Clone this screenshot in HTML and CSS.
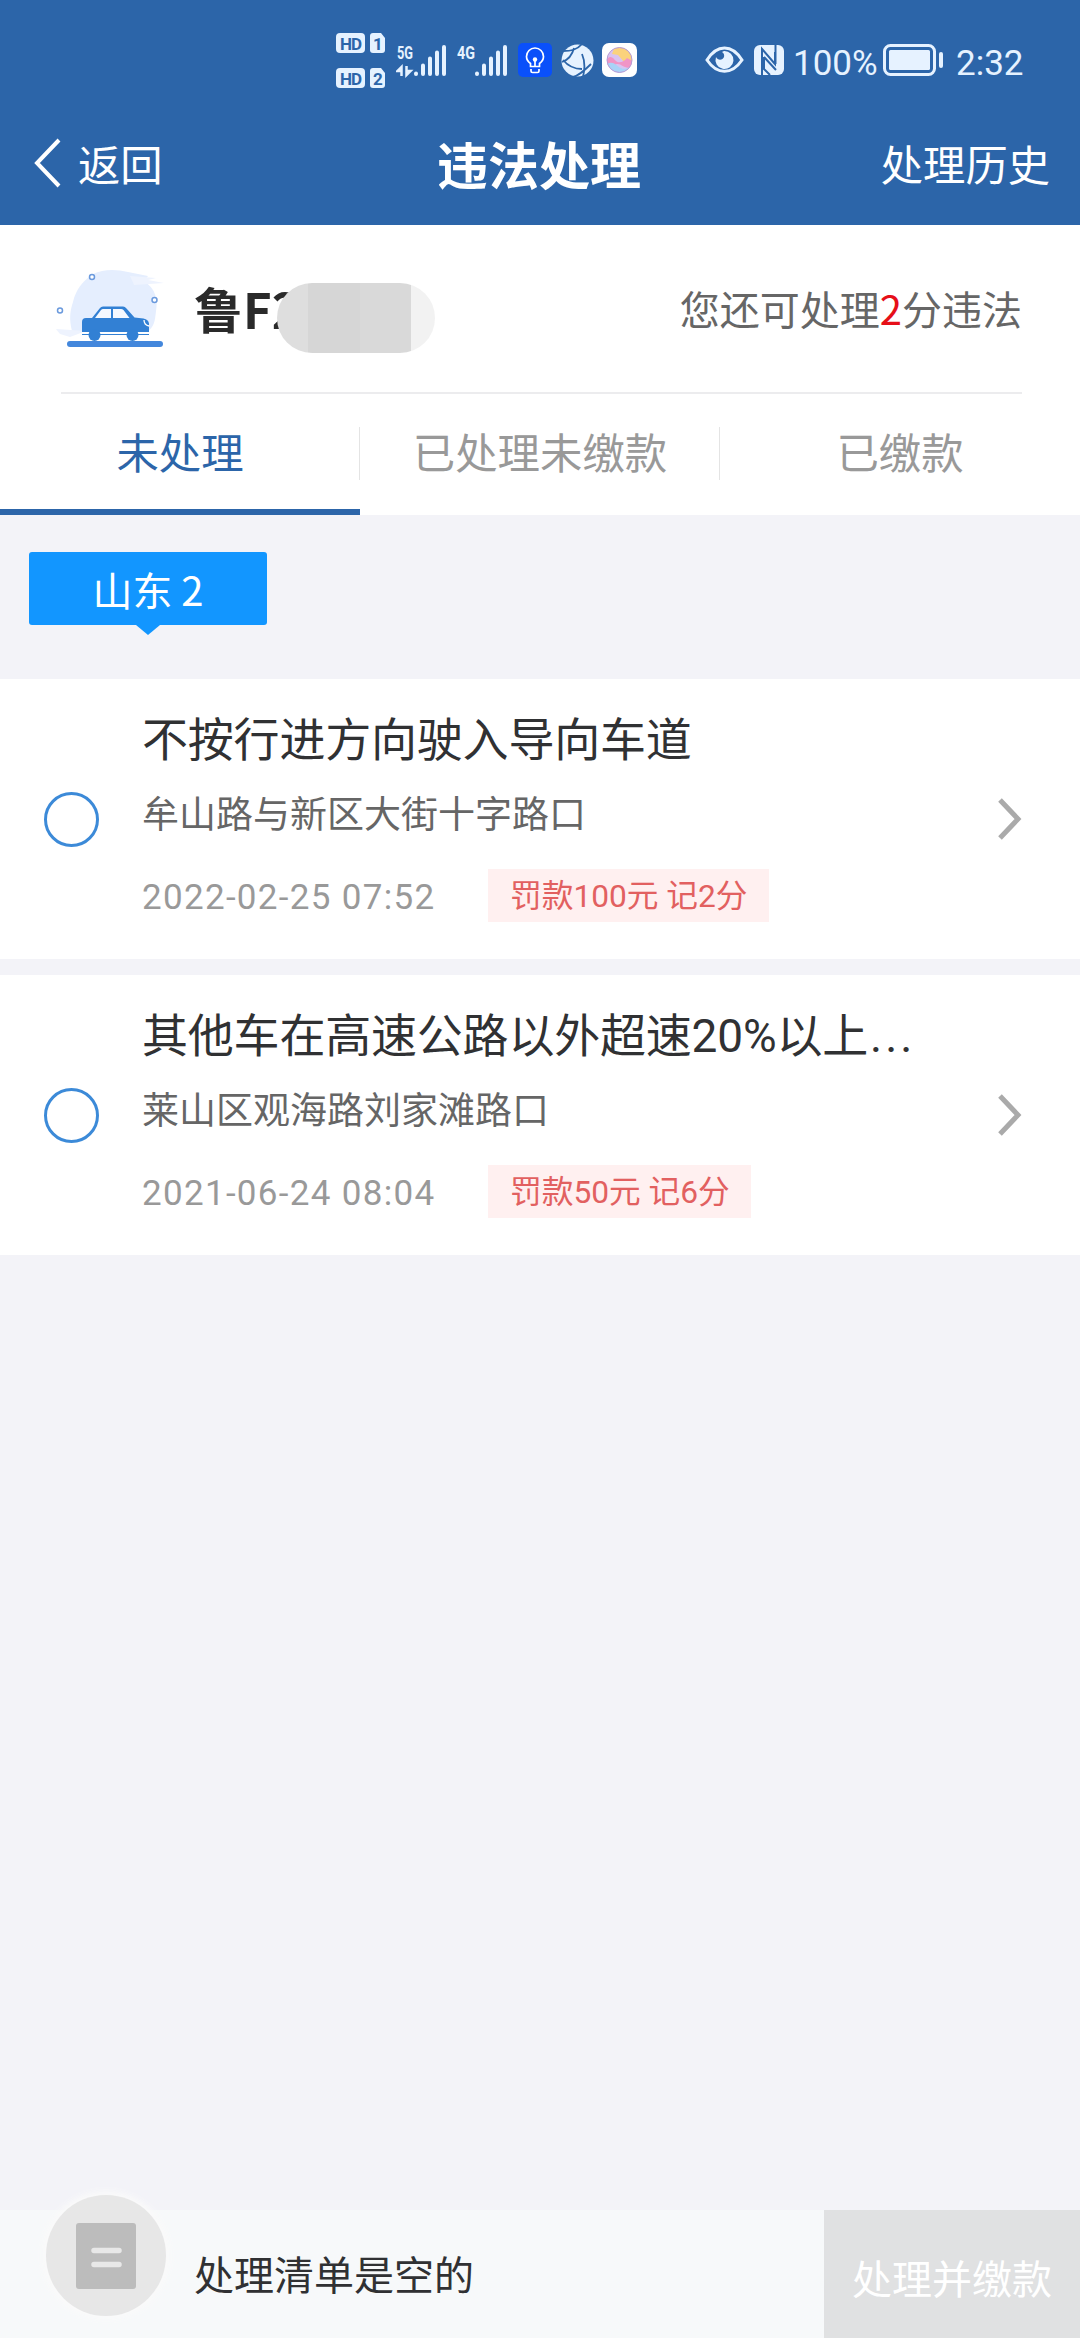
FILE: index.html
```
<!DOCTYPE html>
<html lang="zh-CN">
<head>
    <meta charset="UTF-8">
    <title>违法处理</title>
    <link rel="stylesheet" href="styles.css">
</head>
<body>

    <!-- 状态栏 -->
    <div class="status">
        <svg class="hd" width="50" height="60" viewBox="336 30 50 60">
            <rect x="336" y="33" width="29" height="20" rx="4"/>
            <path d="M370 36q0-3 3-3h8l4 5v12q0 3-3 3h-9q-3 0-3-3z"/>
            <rect x="336" y="68" width="29" height="20" rx="4"/>
            <path d="M370 71q0-3 3-3h8l4 5v12q0 3-3 3h-9q-3 0-3-3z"/>
            <text x="340" y="49.500" textLength="22">HD</text>
            <text x="373" y="49.500">1</text>
            <text x="340" y="84.500" textLength="22">HD</text>
            <text x="373" y="84.500">2</text>
        </svg>
        <svg class="signal" width="51" height="60" viewBox="396 30 51 60">
            <text x="397" y="59" textLength="16" lengthAdjust="spacingAndGlyphs">5G</text>
            <path d="M401.500 76V67l-4 4h4M406.500 66v9l4-4h-4" class="arrows"/>
            <path d="M416 73.500v.5M423 65.500V74M430 58.500V74M437 52.500V74M444 47V74" class="bars"/>
        </svg>
        <svg class="signal four" width="51" height="60" viewBox="457 30 51 60">
            <text x="457" y="59" textLength="18" lengthAdjust="spacingAndGlyphs">4G</text>
            <path d="M477 73.500v.5M484 65.500V74M491 58.500V74M498 52.500V74M505 47V74" class="bars"/>
        </svg>
        <svg class="bulb" width="34" height="34" viewBox="0 0 34 34">
            <rect width="34" height="34" rx="5" fill="#0a50fa"/>
            <path d="M12.500 23.500v-3c-2-1.500-4-4-4-7a8.500 8.500 0 0 1 17 0c0 3-2 5.500-4 7v3zM13 26v2q0 1.500 1.500 1.500h5q1.500 0 1.500-1.500v-2M17 23v-6" fill="none" stroke="#fff" stroke-width="1.700"/>
            <circle cx="17" cy="16.500" r="2.200" fill="#fff"/>
        </svg>
        <svg class="globe" width="33" height="33" viewBox="0 0 33 33">
            <circle cx="16.500" cy="16.500" r="16" fill="#e6f2ff"/>
            <path d="M2 7c8 0 14-1 19-7M1 18c6-2 10-6 12-14M2 16c5 6 12 9 19 9M22 33c2-8 2-16-1-23M12 33c5-1 10-5 18-13" fill="none" stroke="#2c65a9" stroke-width="1.800"/>
        </svg>
        <svg class="ball" width="35" height="34" viewBox="0 0 35 34">
            <defs>
                <clipPath id="ball"><circle cx="17.500" cy="17" r="12.500"/></clipPath>
            </defs>
            <rect width="35" height="34" rx="7" fill="#fff"/>
            <g clip-path="url(#ball)">
                <path d="M4 3h28v28H4z" fill="#d9c3f0"/>
                <path d="M13 3h18v18l-8-1-7-8-6-1z" fill="#fbd27c"/>
                <path d="M4 17c5-6 7-2 10 1s9 0 11-3l7 4v5c-9 3-13-4-17-3s-7 4-11 2z" fill="#f095c6"/>
                <path d="M4 21c8-4 10 2 15 4 4 2 8 0 10-2v9H4z" fill="#a9d3f7"/>
            </g>
            <circle cx="17.500" cy="17" r="12.500" fill="none" stroke="#b79bd6" stroke-width="1"/>
        </svg>
        <svg class="eye" width="39" height="28" viewBox="0 0 39 28">
            <path d="M2 14C12-2 27-2 37 14 27 29 12 29 2 14z" fill="none" stroke="#e6f2ff" stroke-width="3"/>
            <path d="M19 5a9 9 0 1 1-8 6c2 4 7 3 8 0 .5-2 0-4-2-5z" fill="#e6f2ff"/>
        </svg>
        <svg class="nfc" width="30" height="30" viewBox="0 0 30 30">
            <rect width="30" height="30" rx="6" fill="#e6f2ff"/>
            <path d="M8 30V4l13 15V7M8 4l13 15M21.500 0v19M10 12v12l6 6M10 12l12 13" fill="none" stroke="#2c65a9" stroke-width="2"/>
        </svg>
        <span class="percent">100%</span>
        <svg class="battery" width="61" height="32" viewBox="0 0 61 32">
            <rect x="1.500" y="1.500" width="50" height="29" rx="6" fill="none" stroke="#e6f2ff" stroke-width="3"/>
            <rect x="6" y="6" width="41" height="20" rx="1.500" fill="#e6f2ff"/>
            <rect x="56" y="8" width="4" height="16" rx="2" fill="#e6f2ff"/>
        </svg>
        <span class="clock">2:32</span>
    </div>

    <!-- 导航栏 -->
    <header class="nav">
        <a class="back">
            <svg width="27" height="50" viewBox="0 0 27 50"><path d="M25 2L3 25l22 23"/></svg>
            返回
        </a>
        <h1>违法处理</h1>
        <a class="history">处理历史</a>
    </header>

    <!-- 车辆信息 -->
    <section class="car">
        <svg class="car-icon" width="112" height="84" viewBox="54 268 112 84">
            <path d="M72 331c-3-12-2-20 1-29 3-13 10-21 20-28 10-5 23-5 35-2l20 4-4 5c12 8 14 19 12 30-1 10-2 16-8 20z" fill="#e5eefe"/>
            <path d="M56 329l30 2-16 6-10-3zM130 276l26 2-8 2 16 3-30 2z" fill="#eef3fe"/>
            <g fill="#fff" stroke="#6b9add" stroke-width="1.500">
                <circle cx="92" cy="277" r="2.500"/>
                <circle cx="154.500" cy="300" r="2.500"/>
                <circle cx="60" cy="310.500" r="2.500"/>
            </g>
            <path d="M82 332v-10q0-4 4-4h6l8-10q1-1.500 3-1.500h20q2 0 3.500 2l8 9 9 1q5 1 5.500 5v8.500z" fill="#3280d4"/>
            <path d="M95 318l6-8q1-1 2-1h8v9zM113 309h8q1.500 0 2.500 1l6 8h-16.500z" fill="#f4f8ff"/>
            <path d="M144 320q0 5 5 6M82 333h66" fill="none" stroke="#fff" stroke-width="1.300"/>
            <path d="M82 334h67v1H82z" fill="#3280d4"/>
            <circle cx="94.500" cy="335" r="6" fill="#3280d4"/>
            <circle cx="132.500" cy="335" r="6" fill="#3280d4"/>
            <rect x="67" y="341" width="96" height="6" rx="3" fill="#4387dc"/>
        </svg>
        <div class="plate">鲁F2<span class="mask"></span></div>
        <p class="points">您还可处理<b>2</b>分违法</p>
    </section>

    <nav class="tabs">
        <a class="tab active">未处理</a>
        <a class="tab">已处理未缴款</a>
        <a class="tab">已缴款</a>
    </nav>

    <div class="area">
        <span class="province">山东 2</span>
    </div>

    <!-- 违法列表 -->
    <main>
        <div class="item">
            <span class="radio"></span>
            <div class="info">
                <h2>不按行进方向驶入导向车道</h2>
                <p class="address">牟山路与新区大街十字路口</p>
                <div class="meta">
                    <span class="date">2022-02-25 07:52</span>
                    <span class="fine">罚款100元 记2分</span>
                </div>
            </div>
            <svg class="arrow" width="25" height="42" viewBox="0 0 25 42"><path d="M3 2l18 19L3 40"/></svg>
        </div>
        <div class="item">
            <span class="radio"></span>
            <div class="info">
                <h2>其他车在高速公路以外超速20%以上<span class="dots">...</span></h2>
                <p class="address">莱山区观海路刘家滩路口</p>
                <div class="meta">
                    <span class="date">2021-06-24 08:04</span>
                    <span class="fine">罚款50元 记6分</span>
                </div>
            </div>
            <svg class="arrow" width="25" height="42" viewBox="0 0 25 42"><path d="M3 2l18 19L3 40"/></svg>
        </div>
    </main>

    <!-- 底部栏 -->
    <footer>
        <span class="list-icon">
            <svg width="60" height="66" viewBox="0 0 60 66">
                <rect width="60" height="66" rx="3" fill="#bcbcbc"/>
                <path d="M18 27.500h25M18 41.500h25" stroke="#e8e8e8" stroke-width="5.500" stroke-linecap="round"/>
            </svg>
        </span>
        <span class="empty">处理清单是空的</span>
        <a class="pay">处理并缴款</a>
    </footer>

</body>
</html>
```
FILE: styles.css
```
* { box-sizing: border-box; }
body { margin: 0; height: 2338px; display: flex; flex-direction: column; background: #f3f3f8; color: #303133; font-family: "Noto Sans CJK SC", sans-serif; }
h1, h2, p { margin: 0; }
svg { display: block; flex: none; }

/* 状态栏 */
.status { display: flex; align-items: center; flex: none; height: 120px; padding-left: 336px; background: #2c65a9; color: #e6f2ff; font-family: Roboto, sans-serif; font-size: 35px; line-height: 40px; white-space: nowrap; }
.hd { margin-right: 10px; fill: #e6f2ff; }
.hd text { fill: #2c65a9; font: bold 17px Roboto, sans-serif; }
.signal { margin-right: 10px; fill: #e6f2ff; }
.signal text { font: bold 18px Roboto, sans-serif; }
.signal .bars { fill: none; stroke: #e6f2ff; stroke-width: 4; stroke-linecap: round; }
.signal .arrows { fill: none; stroke: #e6f2ff; stroke-width: 2.5; }
.bulb { margin-right: 9px; }
.globe { margin-right: 8px; }
.ball { margin-right: 68px; }
.eye { margin-right: 10px; }
.nfc { margin-right: 9px; }
.percent { width: 90px; padding-top: 7px; }
.battery { margin-right: 12px; }
.clock { padding-top: 7px; }

/* 导航栏 */
.nav { display: grid; grid-template-columns: 1fr auto 1fr; align-items: center; flex: none; height: 105px; padding: 0 30px 20px 34px; background: #2c65a9; color: #fff; font-size: 42.3px; line-height: 60px; }
.nav h1 { margin-left: -6px; font-size: 51px; line-height: 70px; }
.back { display: flex; align-items: center; gap: 17px; }
.back path { fill: none; stroke: #fff; stroke-width: 4; }
.history { text-align: right; }

/* 车辆信息 */
.car { display: flex; align-items: center; flex: none; height: 169px; padding: 0 58px 0 54px; background: linear-gradient(#ececee, #ececee) 61px 100% / 961px 2px no-repeat #fff; }
.plate { position: relative; margin: -3px 0 0 28px; font-size: 49px; font-weight: bold; line-height: 70px; color: #2a2a2a; }
.mask { position: absolute; left: 83px; top: 10px; width: 158px; height: 70px; border-radius: 35px; background: linear-gradient(90deg, #dedede 31px, #d6d6d6 31px, #d6d6d6 83px, #d9d9d9 83px, #d9d9d9 134px, #f2f2f2 134px); }
.points { margin: -3px 0 0 auto; font-size: 40px; color: #666; }
.points b { font-weight: normal; color: #e60f19; }

/* 标签 */
.tabs { display: grid; grid-template-columns: repeat(3, 1fr); flex: none; height: 121px; background: #fff; }
.tab { display: flex; justify-content: center; height: 121px; padding-top: 27px; font-size: 42.4px; line-height: 60px; color: #999; background: linear-gradient(#e4e4e4, #e4e4e4) 100% 33px / 1px 53px no-repeat; }
.tab:last-child { background: none; }
.tab.active { color: #2c65a9; border-bottom: 6px solid #2c65a9; }

.area { flex: none; height: 164px; padding: 37px 29px; }
.province { position: relative; display: block; width: 238px; height: 73px; border-radius: 3px; background: #1296ff; color: #fff; font-size: 40px; line-height: 74px; text-align: center; }
.province::after { content: ""; position: absolute; left: 107px; top: 73px; border: 12px solid transparent; border-top: 10px solid #1296ff; border-bottom: 0; }

/* 违法列表 */
main { flex: 1; }
.item { display: flex; align-items: center; height: 280px; margin-bottom: 16px; padding: 0 58px 0 44px; background: #fff; }
.radio { flex: none; width: 55px; height: 55px; border: 3px solid #3c8ad8; border-radius: 50%; }
.info { flex: 1; margin: -8px 0 0 43px; }
h2, .date, .fine { font-family: Roboto, "Noto Sans CJK SC", sans-serif; }
h2 { height: 64px; font-size: 46px; font-weight: normal; line-height: 67px; letter-spacing: -0.2px; white-space: nowrap; }
.dots { margin-left: 2px; letter-spacing: 3px; }
.address { margin-top: 13px; font-size: 37px; line-height: 56px; color: #666; }
.meta { display: flex; align-items: center; margin-top: 28px; }
.date { width: 346px; padding-top: 4px; font-size: 35px; line-height: 52px; letter-spacing: 1.3px; color: #999; }
.fine { height: 53px; padding: 0 21px 0 22px; background: #fff0f0; color: #e26060; font-size: 31.7px; line-height: 55px; white-space: nowrap; }
.arrow path { fill: none; stroke: #aaa; stroke-width: 5; }

/* 底部栏 */
footer { position: relative; display: flex; flex: none; height: 128px; padding-left: 194px; background: #f7f9fa; font-size: 40px; }
.list-icon { position: absolute; left: 46px; top: -15px; display: flex; align-items: center; justify-content: center; width: 120px; height: 121px; border-radius: 50%; background: #e7e7e7; box-shadow: 0 0 6px 4px #fafafa; }
.empty { flex: 1; line-height: 127px; }
.pay { width: 256px; line-height: 135px; text-align: center; background: #e0e1e2; color: #fff; }
```
